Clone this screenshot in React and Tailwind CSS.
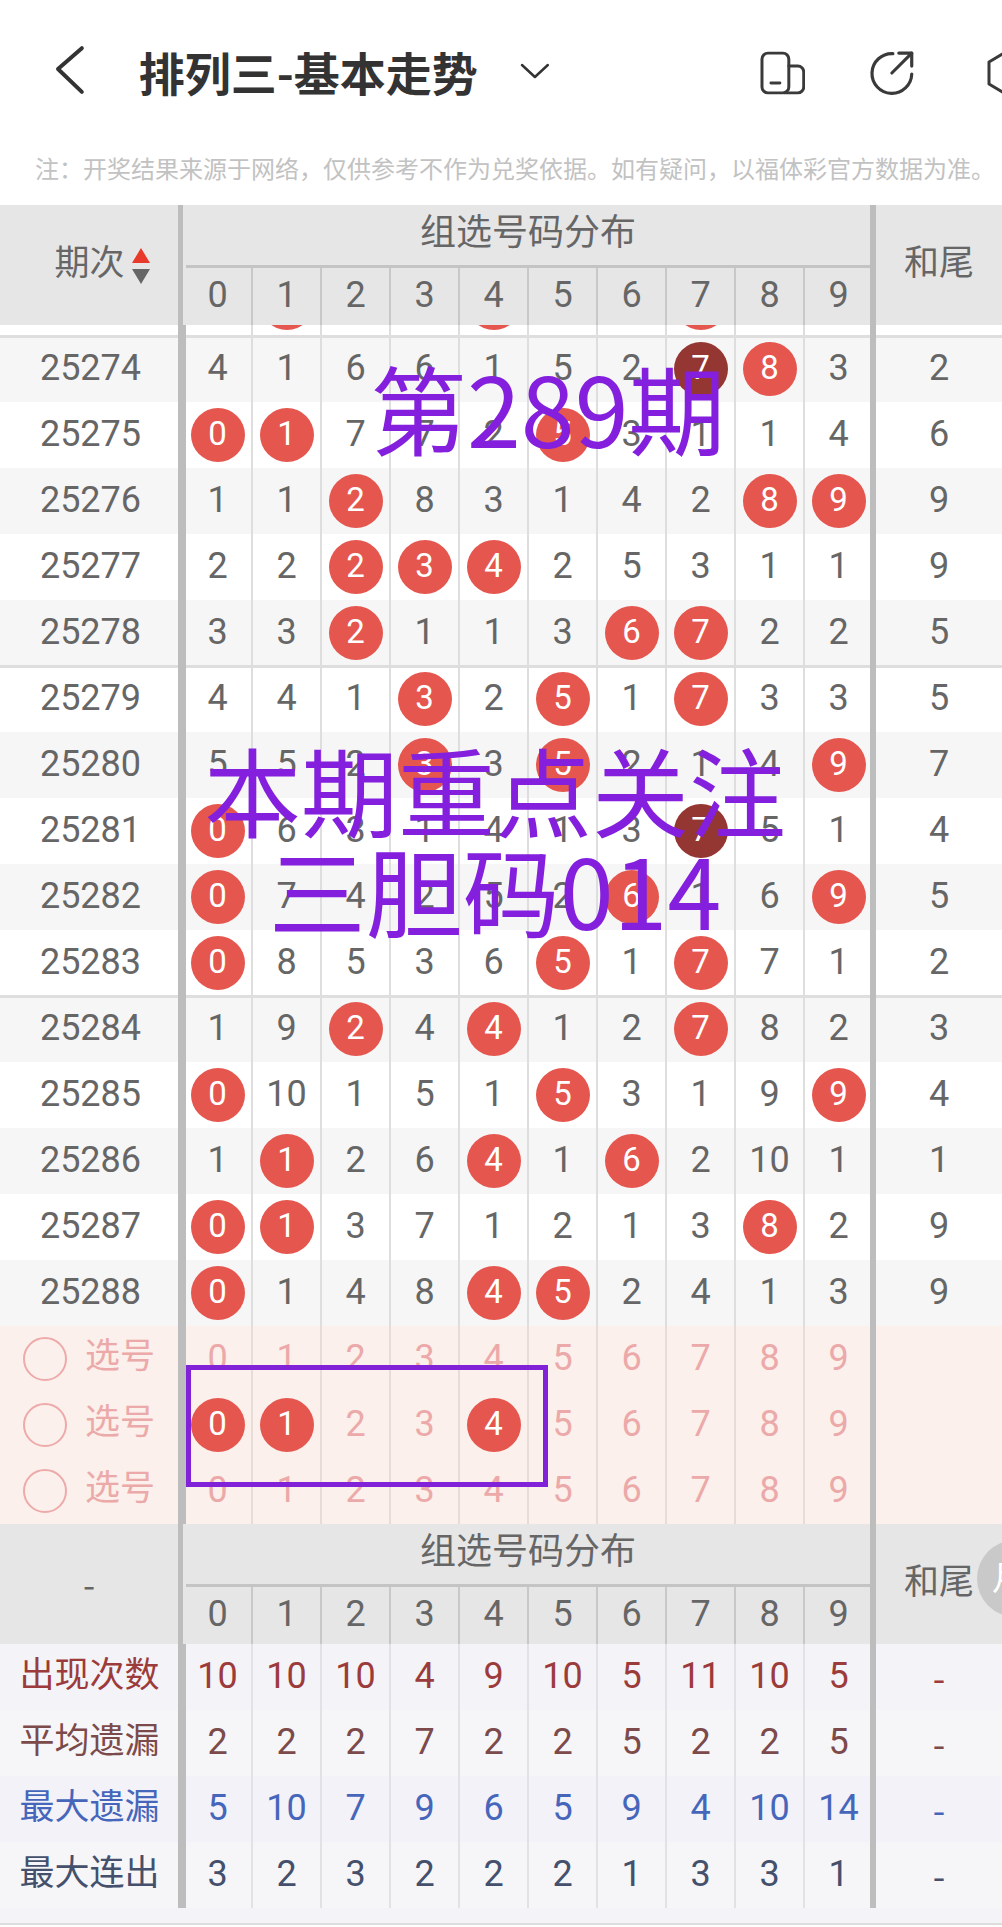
import React from "react";

const DIGITS = [0, 1, 2, 3, 4, 5, 6, 7, 8, 9];

// [period, numbers, red balls, dark balls, tail]
const ROWS = [
  ["25273", [3, 0, 5, 5, 0, 4, 1, 0, 7, 2], [1, 4, 7], [], 1],
  ["25274", [4, 1, 6, 6, 1, 5, 2, 7, 8, 3], [8], [7], 2],
  ["25275", [0, 1, 7, 7, 2, 5, 3, 1, 1, 4], [0, 1, 5], [], 6],
  ["25276", [1, 1, 2, 8, 3, 1, 4, 2, 8, 9], [2, 8, 9], [], 9],
  ["25277", [2, 2, 2, 3, 4, 2, 5, 3, 1, 1], [2, 3, 4], [], 9],
  ["25278", [3, 3, 2, 1, 1, 3, 6, 7, 2, 2], [2, 6, 7], [], 5],
  ["25279", [4, 4, 1, 3, 2, 5, 1, 7, 3, 3], [3, 5, 7], [], 5],
  ["25280", [5, 5, 2, 3, 3, 5, 2, 1, 4, 9], [3, 5, 9], [], 7],
  ["25281", [0, 6, 3, 1, 4, 1, 3, 7, 5, 1], [0], [7], 4],
  ["25282", [0, 7, 4, 2, 5, 2, 6, 1, 6, 9], [0, 6, 9], [], 5],
  ["25283", [0, 8, 5, 3, 6, 5, 1, 7, 7, 1], [0, 5, 7], [], 2],
  ["25284", [1, 9, 2, 4, 4, 1, 2, 7, 8, 2], [2, 4, 7], [], 3],
  ["25285", [0, 10, 1, 5, 1, 5, 3, 1, 9, 9], [0, 5, 9], [], 4],
  ["25286", [1, 1, 2, 6, 4, 1, 6, 2, 10, 1], [1, 4, 6], [], 1],
  ["25287", [0, 1, 3, 7, 1, 2, 1, 3, 8, 2], [0, 1, 8], [], 9],
  ["25288", [0, 1, 4, 8, 4, 5, 2, 4, 1, 3], [0, 4, 5], [], 9],
];

const STATS = [
  { label: "出现次数", nums: [10, 10, 10, 4, 9, 10, 5, 11, 10, 5], text: "text-[#9c3b3b]", bg: "bg-[#f3f3f8]" },
  { label: "平均遗漏", nums: [2, 2, 2, 7, 2, 2, 5, 2, 2, 5], text: "text-[#7c4a4a]", bg: "bg-[#f6f6f8]" },
  { label: "最大遗漏", nums: [5, 10, 7, 9, 6, 5, 9, 4, 10, 14], text: "text-[#4666bb]", bg: "bg-[#f2f2f8]" },
  { label: "最大连出", nums: [3, 2, 3, 2, 2, 2, 1, 3, 3, 1], text: "text-[#44506c]", bg: "bg-[#f6f6f8]" },
];

const Ball = ({ value, dark }) => (
  <span
    className={`flex h-[54px] w-[54px] items-center justify-center rounded-full pb-[2px] text-[33px] text-white ${
      dark ? "bg-[#943632]" : "bg-[#e5564f]"
    }`}
  >
    {value}
  </span>
);

// ten digit columns between the two thick dividers
const Cells = ({ line = "border-[#dedede]", children }) => (
  <div className="h-full w-[698px] shrink-0 border-x-[8px] border-r-[6px] border-[#bdbdbd]">
    <div className="-ml-[2px] flex h-full w-[690px]">
      {React.Children.map(children, (cell, i) => (
        <div
          className={`flex h-full w-[69px] shrink-0 items-center justify-center border-r-2 ${
            i === 9 ? "border-transparent" : line
          }`}
        >
          {cell}
        </div>
      ))}
    </div>
  </div>
);

const Num = ({ children }) => <span className="pb-[2px]">{children}</span>;

const Dash = () => <span className="font-['Noto_Sans_CJK_SC',sans-serif]">-</span>;

const Row = ({ row, index }) => {
  const [period, nums, red, dark, tail] = row;
  const ruled = period === "25274" || period === "25279" || period === "25284";
  return (
    <div
      className={`flex h-[66px] items-center text-[36px] text-[#666] ${index % 2 ? "bg-[#f6f6f6]" : "bg-white"} ${
        ruled ? "shadow-[0_-1px_0_#dedede,inset_0_2px_0_#dedede]" : ""
      }`}
    >
      <div className="flex w-[178px] justify-center pb-[2px] pl-[3px]">{period}</div>
      <Cells>
        {nums.map((n, i) =>
          red.includes(i) || dark.includes(i) ? (
            <Ball key={i} value={n} dark={dark.includes(i)} />
          ) : (
            <Num key={i}>{n}</Num>
          )
        )}
      </Cells>
      <div className="flex flex-1 justify-center pb-[2px]">{tail}</div>
    </div>
  );
};

const PickRow = ({ balls = [] }) => (
  <div className="flex h-[66px] items-center text-[36px] text-[#eca9a9]">
    <div className="flex w-[178px] items-center pl-[23px]">
      <span className="h-[44px] w-[44px] rounded-full border-2 border-[#eeaaaa]" />
      <span className="ml-[18px] pb-[4px] text-[35px]">选号</span>
    </div>
    <Cells line="border-[#e6dcd8]">
      {DIGITS.map((n) => (balls.includes(n) ? <Ball key={n} value={n} /> : <Num key={n}>{n}</Num>))}
    </Cells>
    <div className="flex-1" />
  </div>
);

const TableHead = ({ left }) => (
  <div className="flex h-[120px] items-center bg-[#e6e6e6] text-[#666]">
    <div className="flex h-full w-[178px] items-center justify-center pb-[2px] text-[35px]">{left}</div>
    <div className="h-full w-[698px] shrink-0 border-r-[6px] border-l-[5px] border-[#bdbdbd] pl-[3px]">
      <div className="flex h-[60px] items-center justify-center pb-[4px] text-[36px]">组选号码分布</div>
      <div className="h-[3px] bg-[#c4c4c4]" />
      <div className="-ml-[2px] flex h-[57px] w-[690px] text-[36px]">
        {DIGITS.map((n) => (
          <div
            key={n}
            className={`flex h-full w-[69px] shrink-0 items-center justify-center border-r-2 pb-[4px] ${
              n === 9 ? "border-transparent" : "border-[#c8c8c8]"
            }`}
          >
            {n}
          </div>
        ))}
      </div>
    </div>
    <div className="flex flex-1 justify-center pb-[2px] text-[35px]">和尾</div>
  </div>
);

const PeriodSort = () => (
  <div className="ml-[26px] flex items-center gap-[7px]">
    <span>期次</span>
    <svg width="18" height="36" viewBox="0 0 18 36" className="mt-[4px]">
      <polygon points="9,0 18,15 0,15" fill="#e8392a" />
      <polygon points="0,21 18,21 9,36" fill="#666666" />
    </svg>
  </div>
);

const TopBar = () => (
  <div className="flex h-[140px] items-center text-[#333]">
    <svg width="30" height="50" viewBox="0 0 30 50" className="ml-[55px]" fill="none" stroke="#333" strokeWidth="4" strokeLinecap="round" strokeLinejoin="round">
      <polyline points="27,3 3,24 27,47" />
    </svg>
    <h1 className="ml-[54px] w-[342px] translate-y-[1px] whitespace-nowrap font-['Noto_Sans_CJK_SC',sans-serif] text-[46px] leading-none font-bold">排列三-基本走势</h1>
    <svg width="30" height="16" viewBox="0 0 30 16" className="ml-[41px] mt-[2px]" fill="none" stroke="#333" strokeWidth="2.5" strokeLinecap="round" strokeLinejoin="round">
      <polyline points="2,2 15,14 28,2" />
    </svg>
    <svg width="46" height="44" viewBox="0 0 46 44" className="ml-[210px] mt-[6px]" fill="none" stroke="#3a3a3a" strokeWidth="3" strokeLinecap="round" strokeLinejoin="round">
      <rect x="2" y="2" width="27" height="40" rx="6" />
      <path d="M29 15h9a6 6 0 0 1 6 6v15a6 6 0 0 1-6 6H25" />
      <path d="M11 32h9" />
    </svg>
    <svg width="46" height="46" viewBox="0 0 46 46" className="ml-[64px] mt-[6px]" fill="none" stroke="#3a3a3a" strokeWidth="3.2" strokeLinecap="round" strokeLinejoin="round">
      <path d="M24 3.5A20 20 0 1 0 43 24" />
      <path d="M23 23 43 3" />
      <path d="M30 3h13v13" />
    </svg>
    <svg width="16" height="44" viewBox="0 0 16 44" className="ml-[71px] mt-[6px] shrink-0" fill="none" stroke="#3a3a3a" strokeWidth="3" strokeLinejoin="round">
      <path d="M20 1 3 11V33L20 43" />
    </svg>
  </div>
);

export default function App() {
  return (
    <div className="relative h-[1927px] w-[1002px] overflow-hidden bg-white font-[Roboto,'Noto_Sans_CJK_SC',sans-serif]">
      <TopBar />
      <div className="flex h-[65px] items-center whitespace-nowrap pb-[6px] pl-[35px] text-[24px] text-[#c2c2c2]">
        注：开奖结果来源于网络，仅供参考不作为兑奖依据。如有疑问，以福体彩官方数据为准。
      </div>

      <TableHead left={<PeriodSort />} />

      <div className="h-[1001px] overflow-hidden">
        <div className="-mt-[55px]">
          {ROWS.map((row, i) => (
            <Row key={row[0]} row={row} index={i} />
          ))}
        </div>
      </div>

      <div className="bg-[#fbf0eb]">
        <PickRow />
        <PickRow balls={[0, 1, 4]} />
        <PickRow />
      </div>

      <TableHead left={<Dash />} />

      {STATS.map((s) => (
        <div key={s.label} className={`flex h-[66px] items-center text-[36px] ${s.text} ${s.bg}`}>
          <div className="flex w-[178px] justify-center pb-[2px] pl-[1px] text-[35px]">{s.label}</div>
          <Cells line="border-[#e2e2e6]">
            {s.nums.map((n, i) => (
              <Num key={i}>{n}</Num>
            ))}
          </Cells>
          <div className="flex flex-1 justify-center pb-[2px]">
            <Dash />
          </div>
        </div>
      ))}

      <div className="h-[15px] bg-[#f3f3f8]" />
      <div className="h-[2px] bg-[#dddddd]" />

      {/* floating bubble over the lower head */}
      <div className="absolute left-[977px] top-[1540px] flex h-[77px] w-[77px] items-center rounded-full bg-[#c9c9c9] pl-[15px] text-[34px] text-white">
        月
      </div>

      {/* purple annotations drawn on top of the chart */}
      <div className="absolute left-[370px] top-[350px] whitespace-nowrap font-['Noto_Sans_CJK_SC',sans-serif] text-[97px] leading-[112px] text-[#8420dd]">
        第289期
      </div>
      <div className="absolute left-[195px] top-[738px] w-[600px] whitespace-nowrap text-center font-['Noto_Sans_CJK_SC',sans-serif] text-[97px] leading-[100px] text-[#8420dd]">
        <div>本期重点关注</div>
        <div>三胆码014</div>
      </div>
      <div className="absolute left-[186px] top-[1365px] h-[122px] w-[362px] border-[5px] border-[#8122d8]" />
    </div>
  );
}
